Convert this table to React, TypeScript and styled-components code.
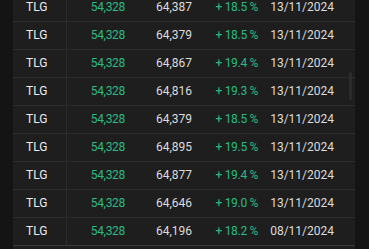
import React from "react";
import styled, { createGlobalStyle } from "styled-components";

type Row = {
  symbol: string;
  price: string;
  target: string;
  change: string;
  date: string;
};

const rows: Row[] = [
  { symbol: "TLG", price: "54,328", target: "64,387", change: "18.5", date: "13/11/2024" },
  { symbol: "TLG", price: "54,328", target: "64,379", change: "18.5", date: "13/11/2024" },
  { symbol: "TLG", price: "54,328", target: "64,867", change: "19.4", date: "13/11/2024" },
  { symbol: "TLG", price: "54,328", target: "64,816", change: "19.3", date: "13/11/2024" },
  { symbol: "TLG", price: "54,328", target: "64,379", change: "18.5", date: "13/11/2024" },
  { symbol: "TLG", price: "54,328", target: "64,895", change: "19.5", date: "13/11/2024" },
  { symbol: "TLG", price: "54,328", target: "64,877", change: "19.4", date: "13/11/2024" },
  { symbol: "TLG", price: "54,328", target: "64,646", change: "19.0", date: "13/11/2024" },
  { symbol: "TLG", price: "54,328", target: "64,196", change: "18.2", date: "08/11/2024" },
];

const App: React.FC = () => {
  return (
    <>
      <GlobalStyle />
      <Screen>
        <Table>
          <Body>
            {rows.map((row, i) => (
              <TableRow key={i} $last={i === rows.length - 1}>
                <SymbolCell>{row.symbol}</SymbolCell>
                <PriceCell>{row.price}</PriceCell>
                <Cell>{row.target}</Cell>
                <ChangeCell>+ {row.change} %</ChangeCell>
                <DateCell>{row.date}</DateCell>
              </TableRow>
            ))}
          </Body>
          <ScrollThumb />
        </Table>
      </Screen>
    </>
  );
};

const GlobalStyle = createGlobalStyle`
  html, body {
    margin: 0;
    padding: 0;
    background: #141414;
  }
  body {
    font-family: Roboto, "Liberation Sans", sans-serif;
  }
`;

const Screen = styled.div`
  width: 369px;
  height: 249px;
  overflow: hidden;
  background: #141414;
  padding: 0 14px 0 13px;
  box-sizing: border-box;
`;

const Table = styled.div`
  position: relative;
  height: 100%;
  background: #1e1e1e;
  overflow: hidden;
`;

const Body = styled.div`
  display: flex;
  flex-direction: column;
  margin-top: -6px;
`;

const TableRow = styled.div<{ $last?: boolean }>`
  display: grid;
  grid-template-columns: 54px 70px 67px 66px 1fr;
  height: 28px;
  box-sizing: border-box;
  border-bottom: 1px solid ${(p) => (p.$last ? "#3a3a3a" : "#2c2c2c")};
  font-size: 12px;
  line-height: 27px;
  color: #dcdcdc;
`;

const Cell = styled.div`
  text-align: right;
  padding-right: 12px;
  white-space: nowrap;
`;

const SymbolCell = styled.div`
  padding-left: 13px;
  color: #ececec;
  border-right: 1px solid #2c2c2c;
`;

const PriceCell = styled(Cell)`
  color: #2dbb84;
  letter-spacing: -0.3px;
`;

const ChangeCell = styled(Cell)`
  color: #2dbb84;
  letter-spacing: -0.3px;
`;

const DateCell = styled(Cell)`
  padding-right: 21px;
`;

const ScrollThumb = styled.div`
  position: absolute;
  left: 336px;
  top: 72px;
  width: 3px;
  height: 28px;
  border-radius: 2px;
  background: #2c2c2c;
`;

export default App;
